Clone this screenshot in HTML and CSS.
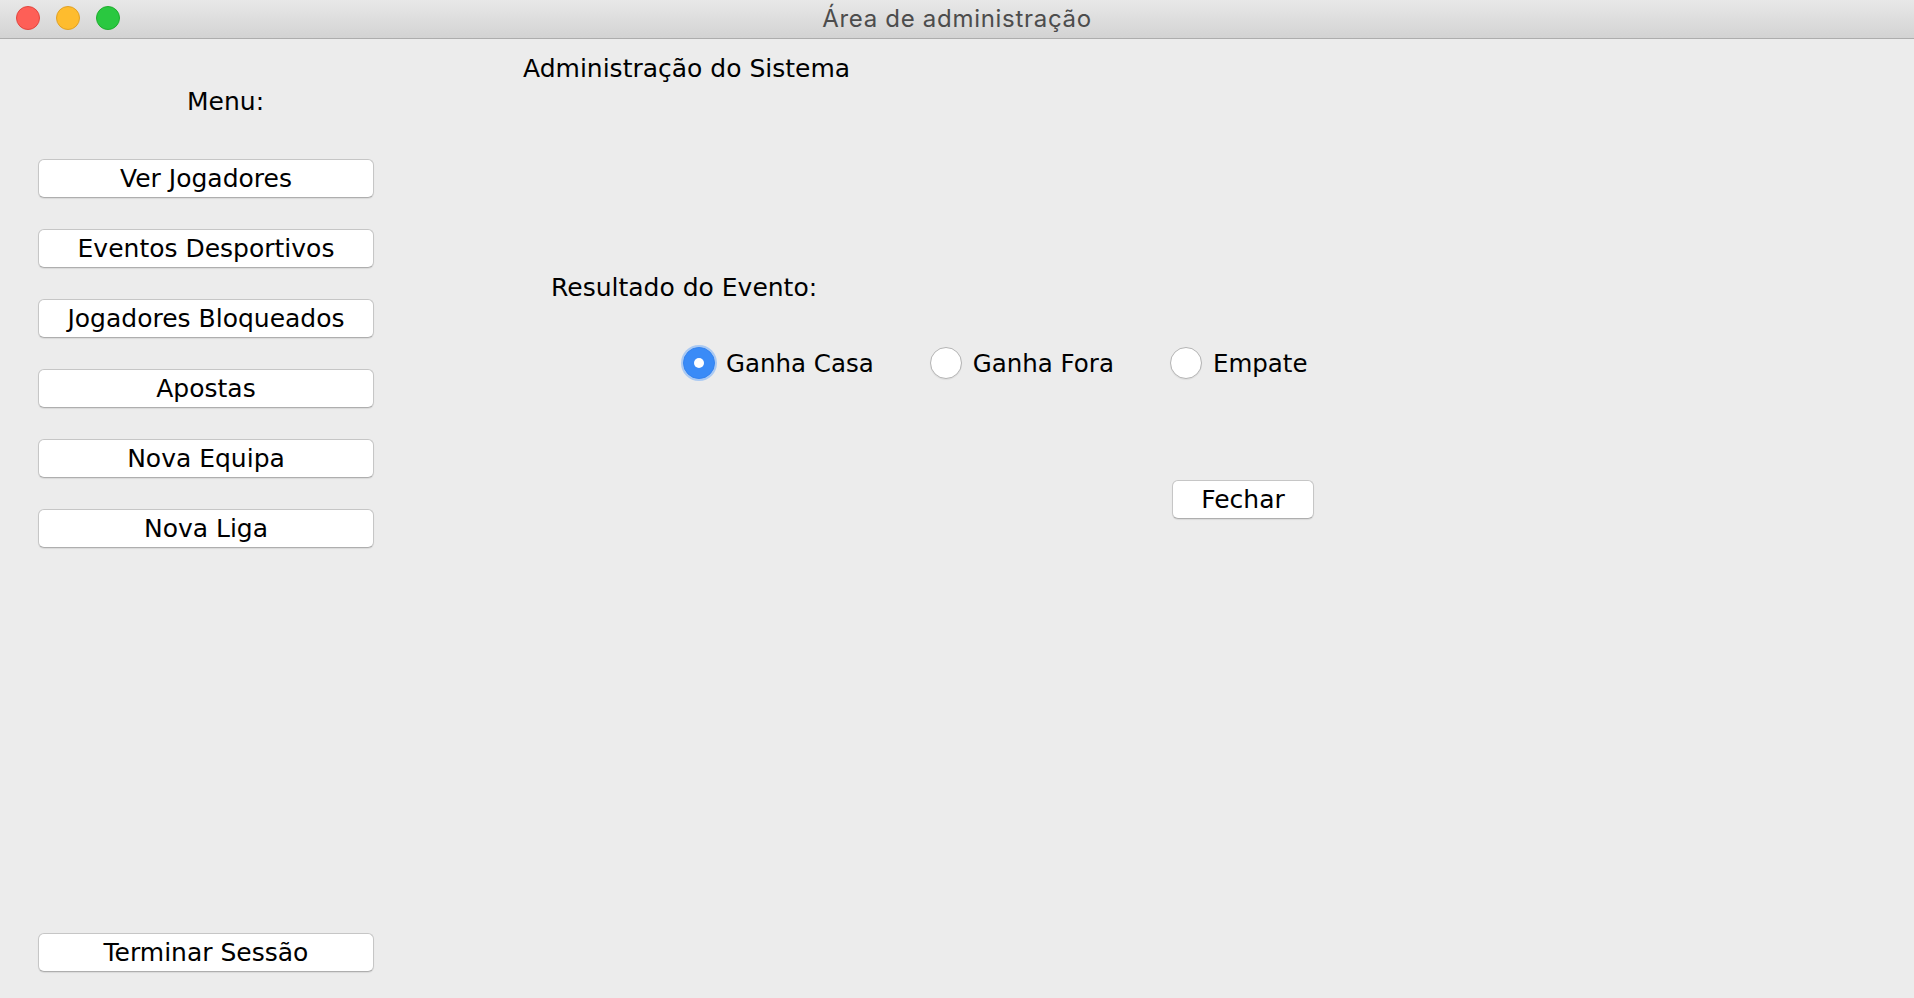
FILE: index.html
```html
<!DOCTYPE html>
<html lang="pt">
<head>
<meta charset="utf-8">
<title>Área de administração</title>
<link rel="stylesheet" href="styles.css">
</head>
<body>
<div class="window">
  <header class="titlebar">
    <div class="lights">
      <span class="light red"></span>
      <span class="light yellow"></span>
      <span class="light green"></span>
    </div>
    <div class="title">Área de administração</div>
    <div class="spacer"></div>
  </header>
  <div class="content">
    <aside class="sidebar">
      <div class="menu-label">Menu:</div>
      <div class="menu-buttons">
        <button class="btn menu-btn">Ver Jogadores</button>
        <button class="btn menu-btn">Eventos Desportivos</button>
        <button class="btn menu-btn">Jogadores Bloqueados</button>
        <button class="btn menu-btn">Apostas</button>
        <button class="btn menu-btn">Nova Equipa</button>
        <button class="btn menu-btn">Nova Liga</button>
      </div>
      <button class="btn menu-btn logout">Terminar Sessão</button>
    </aside>
    <main class="main">
      <h1 class="heading">Administração do Sistema</h1>
      <div class="result-label">Resultado do Evento:</div>
      <div class="radios">
        <label class="radio-item"><span class="radio checked"></span><span class="radio-text">Ganha Casa</span></label>
        <label class="radio-item"><span class="radio"></span><span class="radio-text">Ganha Fora</span></label>
        <label class="radio-item"><span class="radio"></span><span class="radio-text">Empate</span></label>
      </div>
      <button class="btn close-btn">Fechar</button>
    </main>
  </div>
</div>
</body>
</html>
```

FILE: styles.css
```css
html, body {
  margin: 0;
  padding: 0;
}
body {
  width: 1914px;
  height: 998px;
  overflow: hidden;
  background: #ececec;
  font-family: "DejaVu Sans", "Liberation Sans", sans-serif;
  color: #000;
}
.window {
  display: flex;
  flex-direction: column;
  height: 998px;
}
.titlebar {
  height: 38px;
  flex: none;
  display: grid;
  grid-template-columns: 1fr auto 1fr;
  background: linear-gradient(#e8e8e8, #d3d3d3);
  border-bottom: 1px solid #adadad;
}
.lights {
  display: flex;
  gap: 16px;
  padding: 6px 0 0 16px;
  align-items: flex-start;
}
.light {
  width: 22px;
  height: 22px;
  border-radius: 50%;
  border: 1px solid;
}
.red { background: #fe5f57; border-color: #e2463f; }
.yellow { background: #febc2e; border-color: #e1a125; }
.green { background: #2ac840; border-color: #1eae2d; }
.title {
  font-family: Inter, "Liberation Sans", sans-serif;
  font-size: 24px;
  letter-spacing: 0.7px;
  color: #4c4c4c;
  line-height: 36px;
  padding-top: 1px;
}
.content {
  flex: 1;
  display: flex;
  font-size: 25px;
  line-height: 30px;
}
.sidebar {
  width: 336px;
  padding: 48px 38px 26px 38px;
  display: flex;
  flex-direction: column;
}
.menu-label {
  margin-left: 149px;
}
.menu-buttons {
  margin-top: 42px;
  display: flex;
  flex-direction: column;
  gap: 31px;
  flex: 1;
}
.btn {
  font-family: "DejaVu Sans", "Liberation Sans", sans-serif;
  font-size: 25px;
  line-height: 36px;
  height: 39px;
  padding: 1px 0 0 0;
  background: #fff;
  border: 1px solid #c6c6c6;
  border-bottom-color: #aeaeae;
  border-radius: 6px;
  box-shadow: 0 1px 1px rgba(0, 0, 0, 0.08);
  color: #000;
  text-align: center;
}
.menu-btn {
  width: 336px;
}
.main {
  flex: 1;
  padding-top: 15px;
  padding-left: 111px;
  display: flex;
  flex-direction: column;
  align-items: flex-start;
}
.heading {
  font-size: 25px;
  font-weight: normal;
  margin: 0;
  line-height: 30px;
}
.result-label {
  margin-top: 189px;
  margin-left: 28px;
}
.radios {
  margin-top: 42px;
  margin-left: 160px;
  display: flex;
  gap: 56px;
  font-size: 24.5px;
}
.radio-item {
  display: flex;
  align-items: center;
  gap: 11px;
  line-height: 32px;
}
.radio-text {
  padding-top: 3px;
}
.radio {
  width: 30px;
  height: 30px;
  border-radius: 50%;
  background: #fff;
  border: 1px solid #b4b4b4;
  box-shadow: 0 1px 1px rgba(0, 0, 0, 0.06);
  display: flex;
  align-items: center;
  justify-content: center;
}
.radio.checked {
  background: #3a8bf7;
  border-color: #3584f0;
  box-shadow: 0 0 0 2px rgba(90, 160, 250, 0.45);
}
.radio.checked::after {
  content: "";
  width: 10px;
  height: 10px;
  border-radius: 50%;
  background: #fff;
}
.close-btn {
  margin-top: 100px;
  margin-left: 649px;
  width: 142px;
  height: 39px;
}
```
